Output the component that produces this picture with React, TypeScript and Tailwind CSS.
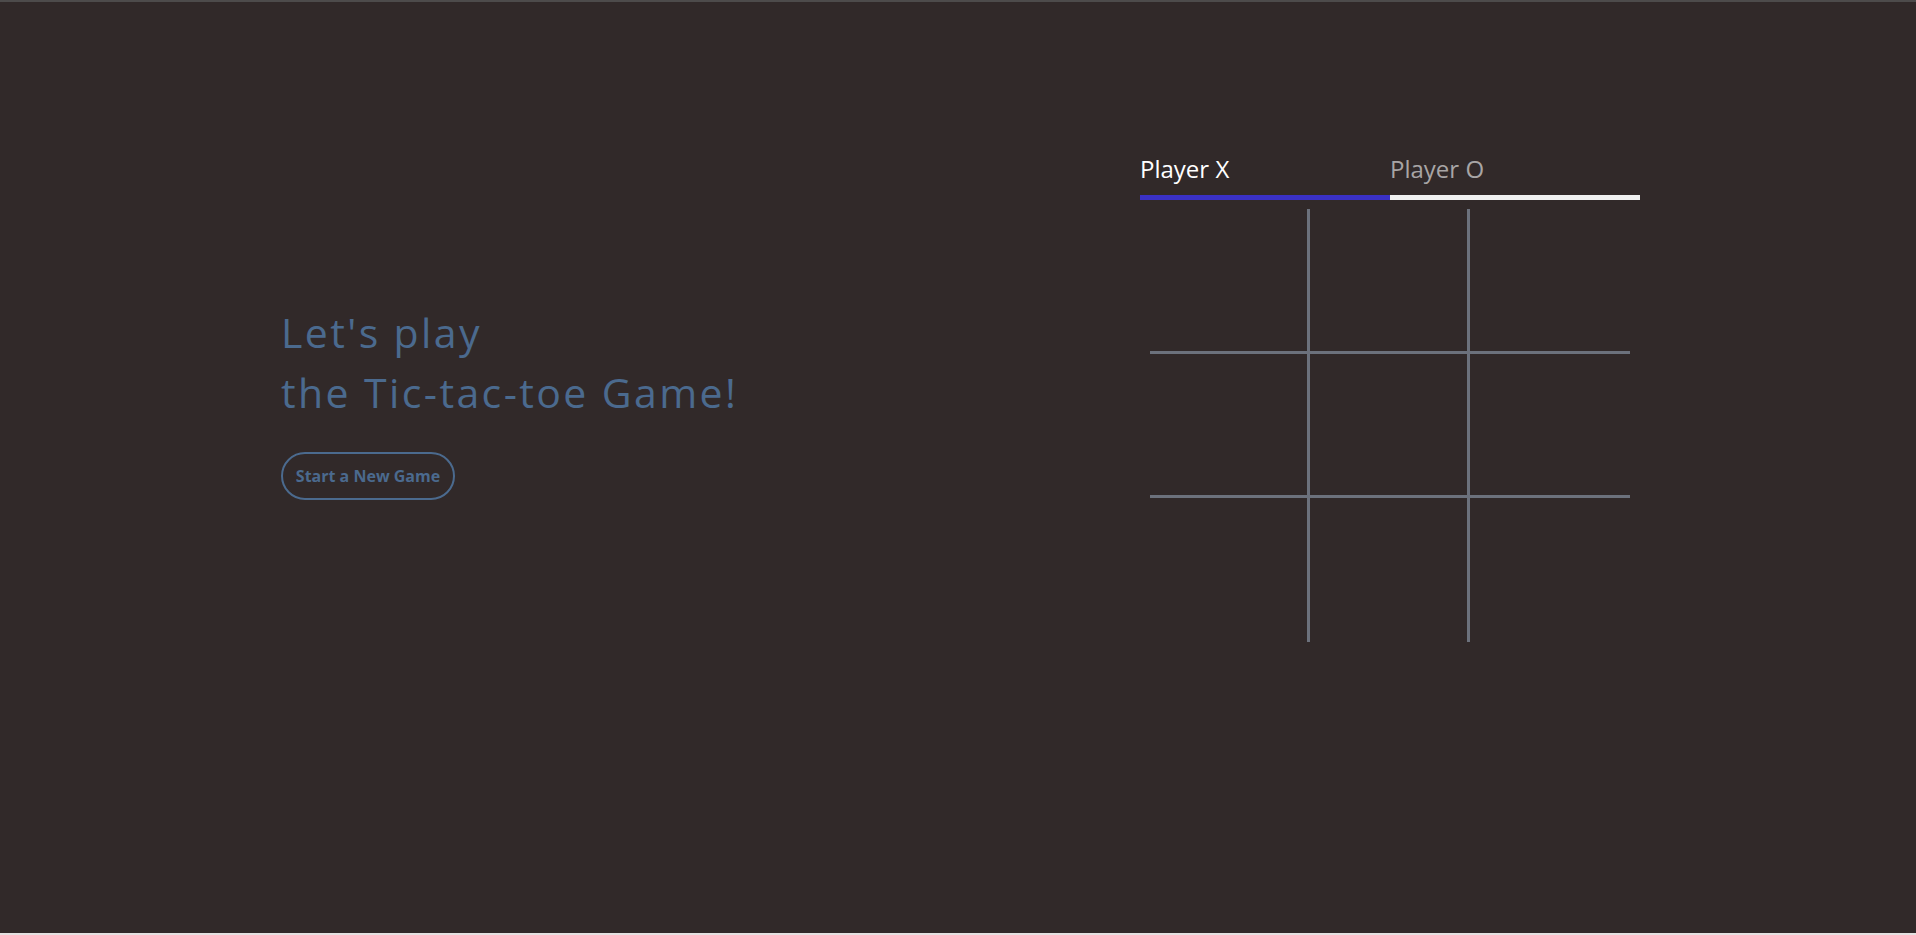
import { useState } from 'react';

type Cell = 'X' | 'O' | null;

export default function App() {
  const [turn, setTurn] = useState<'X' | 'O'>('X');
  const [board, setBoard] = useState<Cell[]>(Array(9).fill(null));

  const play = (i: number) => {
    if (board[i]) return;
    const next = [...board];
    next[i] = turn;
    setBoard(next);
    setTurn(turn === 'X' ? 'O' : 'X');
  };

  const reset = () => {
    setBoard(Array(9).fill(null));
    setTurn('X');
  };

  return (
    <div className="min-h-screen bg-[#e4e1e1] font-['Open_Sans',sans-serif]">
      <main className="h-[933px] bg-[#312929] border-t-2 border-[#4d4b4b] flex justify-between pl-[281px] pr-[276px]">
        <section className="mt-[300px] flex flex-col items-start">
          <h1 className="text-[41px] leading-[60px] font-medium text-[#4b6a8e] tracking-[2.4px]">
            Let's play
            <br />
            the Tic-tac-toe Game!
          </h1>
          <button
            onClick={reset}
            className="mt-[30px] h-12 w-[174px] rounded-full border-2 border-[#4b6a8e] text-base font-bold text-[#4b6a8e] cursor-pointer"
          >
            Start a New Game
          </button>
        </section>

        <section className="mt-[147px] w-[500px] flex flex-col items-center">
          <div className="w-full flex">
            <div className={`w-1/2 pt-[2px] pb-2 border-b-[5px] border-[#3a31c6] text-2xl leading-9 ${turn === 'X' ? 'text-white' : 'text-[#a8a5a5]'}`}>
              Player X
            </div>
            <div className={`w-1/2 pt-[2px] pb-2 border-b-[5px] border-[#f0f0f0] text-2xl leading-9 ${turn === 'O' ? 'text-white' : 'text-[#a8a5a5]'}`}>
              Player O
            </div>
          </div>
          <div className="mt-[9px] grid grid-cols-[157px_163px_160px] grid-rows-[142px_147px_144px]">
            {board.map((c, i) => {
              const col = i % 3;
              const row = Math.floor(i / 3);
              return (
                <button
                  key={i}
                  onClick={() => play(i)}
                  className={`flex items-center justify-center text-6xl text-[#c9c9c9] border-[#6c717c] cursor-pointer ${col === 1 ? 'border-x-[3px]' : ''} ${row === 1 ? 'border-y-[3px]' : ''}`}
                >
                  {c}
                </button>
              );
            })}
          </div>
        </section>
      </main>
    </div>
  );
}
